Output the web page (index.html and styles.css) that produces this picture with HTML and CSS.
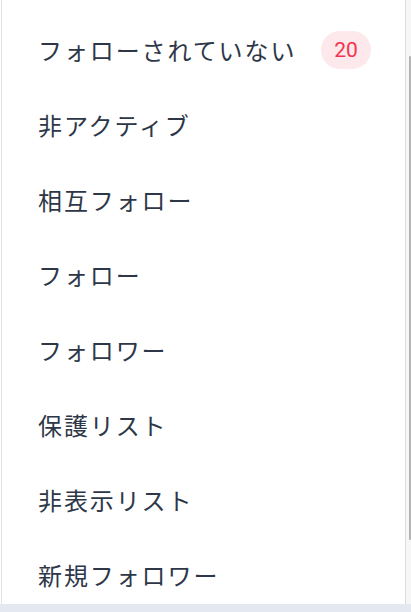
FILE: index.html
```html
<!DOCTYPE html>
<html lang="ja">
<head>
  <meta charset="UTF-8">
  <meta name="viewport" content="width=device-width, initial-scale=1.0">
  <title>フォロー管理</title>
  <link rel="stylesheet" href="styles.css">
</head>
<body>
  <div class="frame">
    <nav class="menu">
      <ul class="menu-list">
        <li class="menu-item">
          <span class="menu-label">フォローされていない</span>
          <span class="badge">20</span>
        </li>
        <li class="menu-item"><span class="menu-label">非アクティブ</span></li>
        <li class="menu-item"><span class="menu-label">相互フォロー</span></li>
        <li class="menu-item"><span class="menu-label">フォロー</span></li>
        <li class="menu-item"><span class="menu-label">フォロワー</span></li>
        <li class="menu-item"><span class="menu-label">保護リスト</span></li>
        <li class="menu-item"><span class="menu-label">非表示リスト</span></li>
        <li class="menu-item"><span class="menu-label">新規フォロワー</span></li>
      </ul>
    </nav>
    <div class="scrollbar">
      <div class="scroll-thumb"></div>
    </div>
  </div>
  <div class="footer-strip"></div>
</body>
</html>
```

FILE: styles.css
```css
* {
  box-sizing: border-box;
}
body {
  margin: 0;
  font-family: "Noto Sans CJK JP", "Noto Sans", sans-serif;
  background: #fff;
  color: #2d3748;
  height: 612px;
  overflow: hidden;
}
.frame {
  display: flex;
  height: 604px;
  padding-left: 1px;
  overflow: hidden;
}
.menu {
  flex: 1;
  border-left: 1px solid #e2e2e2;
  border-right: 1px solid #dcdcdc;
  background: #fff;
  overflow: hidden;
}
.menu-list {
  list-style: none;
  margin: 0;
  padding: 12px 0 0 0;
}
.menu-item {
  display: flex;
  align-items: center;
  height: 75px;
  padding-left: 36px;
  padding-right: 34px;
}
.menu-label {
  font-size: 24px;
  letter-spacing: 1.9px;
  line-height: 1;
  flex: 1;
}
.badge {
  display: inline-flex;
  align-items: center;
  justify-content: center;
  width: 50px;
  height: 38px;
  border-radius: 19px;
  background: #fde8eb;
  color: #f2344f;
  font-family: Roboto, "Liberation Sans", sans-serif;
  font-size: 21px;
  font-weight: 400;
}
/* fake scrollbar on the right edge */
.scrollbar {
  width: 5px;
  background: #f6f6f6;
  padding-top: 56px;
  display: flex;
  justify-content: flex-end;
}
.scroll-thumb {
  width: 2px;
  height: 484px;
  background: #b4b4b4;
  border-radius: 1px;
}
.footer-strip {
  height: 8px;
  background: #e4e9f1;
}
```
